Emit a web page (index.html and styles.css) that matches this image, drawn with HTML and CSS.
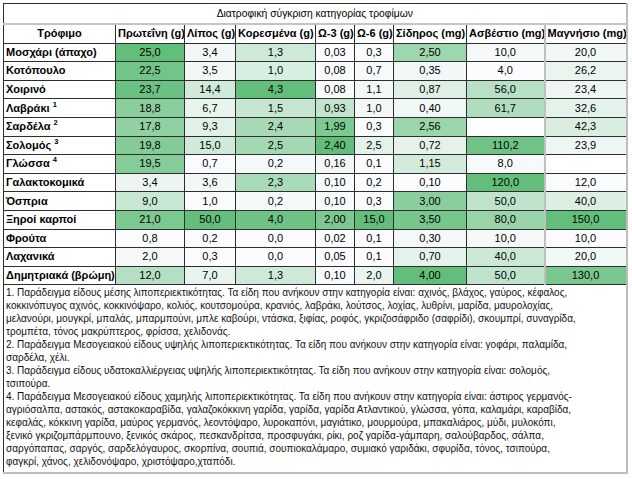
FILE: index.html
```html
<!DOCTYPE html>
<html lang="el">
<head>
<meta charset="utf-8">
<title>Διατροφική σύγκριση κατηγορίας τροφίμων</title>
<link rel="stylesheet" href="styles.css">
</head>
<body>
<div class="page">
<table class="grid" id="grid">
  <colgroup>
    <col class="c-name"><col class="c-prot"><col class="c-fat"><col class="c-sat"><col class="c-o3"><col class="c-o6"><col class="c-fe"><col class="c-ca"><col class="c-mg">
  </colgroup>
  <thead>
    <tr class="title-row"><th colspan="9" class="title">Διατροφική σύγκριση κατηγορίας τροφίμων</th></tr>
    <tr class="head-row">
      <th>Τρόφιμο</th><th>Πρωτεΐνη (g)</th><th>Λίπος (g)</th><th>Κορεσμένα (g)</th><th>Ω-3 (g)</th><th>Ω-6 (g)</th><th>Σίδηρος (mg)</th><th class="gray-r">Ασβέστιο (mg)</th><th>Μαγνήσιο (mg)</th>
    </tr>
  </thead>
  <tbody>
    <tr class="data"><td class="name">Μοσχάρι (άπαχο)</td><td>25,0</td><td>3,4</td><td>1,3</td><td>0,03</td><td>0,3</td><td>2,50</td><td class="gray-r">10,0</td><td>20,0</td></tr>
    <tr class="data"><td class="name">Κοτόπουλο</td><td>22,5</td><td>3,5</td><td>1,0</td><td>0,08</td><td>0,7</td><td>0,35</td><td class="gray-r">4,0</td><td>26,2</td></tr>
    <tr class="data"><td class="name">Χοιρινό</td><td>23,7</td><td>14,4</td><td>4,3</td><td>0,08</td><td>1,1</td><td>0,87</td><td class="gray-r">56,0</td><td>23,4</td></tr>
    <tr class="data"><td class="name">Λαβράκι <sup>1</sup></td><td>18,8</td><td>6,7</td><td>1,5</td><td>0,93</td><td>1,0</td><td>0,40</td><td class="gray-r">61,7</td><td>32,6</td></tr>
    <tr class="data"><td class="name">Σαρδέλα <sup>2</sup></td><td>17,8</td><td>9,3</td><td>2,4</td><td>1,99</td><td>0,3</td><td>2,56</td><td class="gray-r"></td><td>42,3</td></tr>
    <tr class="data"><td class="name">Σολομός <sup>3</sup></td><td>19,8</td><td>15,0</td><td>2,5</td><td>2,40</td><td>2,5</td><td>0,72</td><td class="gray-r">110,2</td><td>23,9</td></tr>
    <tr class="data"><td class="name">Γλώσσα <sup>4</sup></td><td>19,5</td><td>0,7</td><td>0,2</td><td>0,16</td><td>0,1</td><td>1,15</td><td class="gray-r">8,0</td><td></td></tr>
    <tr class="data"><td class="name">Γαλακτοκομικά</td><td>3,4</td><td>3,6</td><td>2,3</td><td>0,10</td><td>0,2</td><td>0,10</td><td class="gray-r">120,0</td><td>12,0</td></tr>
    <tr class="data"><td class="name">Όσπρια</td><td>9,0</td><td>1,0</td><td>0,2</td><td>0,10</td><td>0,3</td><td>3,00</td><td class="gray-r">50,0</td><td>40,0</td></tr>
    <tr class="data"><td class="name">Ξηροί καρποί</td><td>21,0</td><td>50,0</td><td>4,0</td><td>2,00</td><td>15,0</td><td>3,50</td><td class="gray-r">80,0</td><td>150,0</td></tr>
    <tr class="data"><td class="name">Φρούτα</td><td>0,8</td><td>0,2</td><td>0,0</td><td>0,02</td><td>0,1</td><td>0,30</td><td class="gray-r">10,0</td><td>10,0</td></tr>
    <tr class="data"><td class="name">Λαχανικά</td><td>2,0</td><td>0,3</td><td>0,0</td><td>0,05</td><td>0,1</td><td>0,70</td><td class="gray-r">40,0</td><td>20,0</td></tr>
    <tr class="data"><td class="name">Δημητριακά (βρώμη)</td><td>12,0</td><td>7,0</td><td>1,3</td><td>0,10</td><td>2,0</td><td>4,00</td><td class="gray-r">50,0</td><td>130,0</td></tr>
    <tr class="notes-row">
      <td colspan="9" class="notes">
        <p>1. Παράδειγμα είδους μέσης λιποπεριεκτικότητας. Τα είδη που ανήκουν στην κατηγορία είναι: αχινός, βλάχος, γαύρος, κέφαλος,<br>κοκκινόπυγος αχινός, κοκκινόψαρο, κολιός, κουτσομούρα, κρανιός, λαβράκι, λούτσος, λοχίας, λυθρίνι, μαρίδα, μαυρολοχίας,<br>μελανούρι, μουγκρί, μπαλάς, μπαρμπούνι, μπλε καβούρι, ντάσκα, ξιφίας, ροφός, γκριζοσάφριδο (σαφρίδι), σκουμπρί, συναγρίδα,<br>τρομπέτα, τόνος μακρύπτερος, φρίσσα, χελιδονάς.</p>
        <p>2. Παράδειγμα Μεσογειακού είδους υψηλής λιποπεριεκτικότητας. Τα είδη που ανήκουν στην κατηγορία είναι: γοφάρι, παλαμίδα,<br>σαρδέλα, χέλι.</p>
        <p>3. Παράδειγμα είδους υδατοκαλλιέργειας υψηλής λιποπεριεκτικότητας. Τα είδη που ανήκουν στην κατηγορία είναι: σολομός,<br>τσιπούρα.</p>
        <p>4. Παράδειγμα Μεσογειακού είδους χαμηλής λιποπεριεκτικότητας. Τα είδη που ανήκουν στην κατηγορία είναι: άστιρος γερμανός-<br>αγριόσαλπα, αστακός, αστακοκαραβίδα, γαλαζοκόκκινη γαρίδα, γαρίδα, γαρίδα Ατλαντικού, γλώσσα, γόπα, καλαμάρι, καραβίδα,<br>κεφαλάς, κόκκινη γαρίδα, μαύρος γερμανός, λεοντόψαρο, λυροκαπόνι, μαγιάτικο, μουρμούρα, μπακαλιάρος, μύδι, μυλοκόπι,<br>ξενικό γκριζομπάρμπουνο, ξενικός σκάρος, πεσκανδρίτσα, προσφυγάκι, ρίκι, ροζ γαρίδα-γάμπαρη, σαλούβαρδος, σάλπα,<br>σαργόπαπας, σαργός, σαρδελόγαυρος, σκορπίνα, σουπιά, σουπιοκαλάμαρο, συμιακό γαριδάκι, σφυρίδα, τόνος, τσιπούρα,<br>φαγκρί, χάνος, χελιδονόψαρο, χριστόψαρο,χταπόδι.</p>
      </td>
    </tr>
  </tbody>
</table>
</div>
<script src="script.js"></script>
</body>
</html>
```

FILE: styles.css
```css
html, body {
  margin: 0;
  padding: 0;
  background: #ffffff;
}

body {
  font-family: "Liberation Sans", Arial, sans-serif;
  color: #000;
}

.page {
  padding: 3px 0 0 3px;
}

.grid {
  border-collapse: collapse;
  table-layout: fixed;
  width: 624px;
  font-size: 11px;
}

.c-name { width: 112px; }
.c-prot { width: 69px; }
.c-fat  { width: 51px; }
.c-sat  { width: 80px; }
.c-o3   { width: 39px; }
.c-o6   { width: 39px; }
.c-fe   { width: 73px; }
.c-ca   { width: 78px; }
.c-mg   { width: 82px; }

.grid th,
.grid td {
  border: 1px solid #2e2e2e;
  padding: 0 2px;
  height: 17.6px;
  line-height: 13px;
  text-align: center;
  white-space: nowrap;
  overflow: hidden;
}

.grid th {
  font-weight: bold;
}

.head-row th {
  height: 18px;
}

.grid .title {
  font-weight: normal;
  font-size: 10.3px;
  height: 18.6px;
  border-bottom: 2px solid #c4c4c4;
  border-right: 2px solid #bdbdbd;
}

.head-row th:last-child,
.data td:last-child {
  border-right: 2px solid #bdbdbd;
}

.grid .gray-r {
  border-right: 2px solid #c0c0c0;
}

.grid .name {
  text-align: left;
  font-weight: bold;
  padding-left: 2px;
}

.name sup {
  font-size: 7.5px;
  line-height: 0;
  vertical-align: 5px;
}

.grid .notes {
  text-align: left;
  font-size: 10px;
  line-height: 13px;
  padding: 1px 2px 4px 2px;
  height: auto;
  border-right: 2px solid #bdbdbd;
  border-bottom: 2px solid #bdbdbd;
  color: #111;
}

.notes p {
  margin: 0;
}
```

FILE: script.js
```js
(function () {
  var table = document.getElementById('grid');
  var rows = table.querySelectorAll('tr.data');
  var lo = [252, 252, 255];
  var hi = [99, 190, 123];
  for (var c = 1; c <= 8; c++) {
    var vals = [];
    rows.forEach(function (r) {
      var t = r.children[c].textContent.trim();
      if (t) vals.push(parseFloat(t.replace(',', '.')));
    });
    var min = Math.min.apply(null, vals);
    var max = Math.max.apply(null, vals);
    rows.forEach(function (r) {
      var cell = r.children[c];
      var t = cell.textContent.trim();
      if (!t) return;
      var v = parseFloat(t.replace(',', '.'));
      var k = max > min ? (v - min) / (max - min) : 0;
      var rgb = lo.map(function (a, i) { return Math.round(a + (hi[i] - a) * k); });
      cell.style.backgroundColor = 'rgb(' + rgb.join(',') + ')';
    });
  }
})();
```
